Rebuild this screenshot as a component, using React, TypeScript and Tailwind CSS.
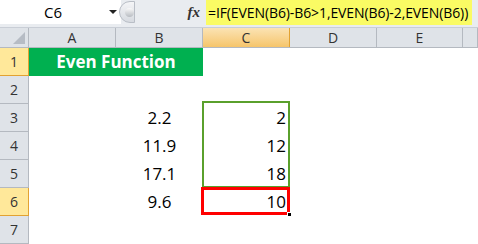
import React from "react";

const font = { fontFamily: '"Open Sans", "Liberation Sans", sans-serif' };

const cols = ["A", "B", "C", "D", "E", ""];

const rows: { b?: string; c?: string }[] = [
  {},
  {},
  { b: "2.2", c: "2" },
  { b: "11.9", c: "12" },
  { b: "17.1", c: "18" },
  { b: "9.6", c: "10" },
  {},
];

const App = () => {
  return (
    <div className="w-[478px] h-[244px] overflow-hidden bg-white text-black" style={font}>
      {/* formula bar */}
      <div className="flex h-[28px] bg-[#e9ecf0] border-b border-[#c9ced6]">
        <div className="flex h-[24px] w-[121px] items-center bg-white">
          <span className="w-[106px] text-center text-[15px]">C6</span>
          <span className="ml-[3px] h-0 w-0 border-x-[4px] border-t-[4px] border-x-transparent border-t-[#222]" />
        </div>
        <div className="relative flex h-[24px] w-[85px] items-center">
          {/* grip knob */}
          <div className="absolute left-[-2px] top-[1px] h-[22px] w-[16px] rounded-l-full border border-[#b9bec6] bg-gradient-to-b from-[#f4f5f7] to-[#d6dae0]">
            <div className="ml-[5px] mt-[6px] h-[9px] w-[9px] rounded-full bg-gradient-to-b from-[#fafafa] to-[#b8bcc2]" />
          </div>
          <span
            className="ml-auto mr-[6px] text-[15px] italic font-bold text-[#333]"
            style={{ fontFamily: '"Liberation Serif", serif' }}
          >
            fx
          </span>
        </div>
        <div className="flex h-[25px] w-[266px] items-center overflow-hidden whitespace-nowrap bg-[#fafb64] pl-[2px] text-[14px] tracking-[-0.1px]">
          =IF(EVEN(B6)-B6&gt;1,EVEN(B6)-2,EVEN(B6))
        </div>
      </div>

      {/* column headers */}
      <div className="flex h-[20px] border-b border-[#b4b9c0] bg-[#dfe3e8] text-[14px] text-[#333]">
        <div className="relative w-[29px] border-r border-[#b4b9c0]">
          <div className="absolute bottom-[3px] right-[3px] h-0 w-0 border-b-[12px] border-l-[12px] border-b-[#b6bcc4] border-l-transparent" />
        </div>
        {cols.map((c, i) => (
          <div
            key={i}
            className={`flex items-center justify-center border-r ${
              i === 5 ? "flex-1" : i === 4 ? "w-[86px]" : "w-[87px]"
            } ${
              c === "C"
                ? "border-[#e2a232] bg-gradient-to-b from-[#fbe3b3] to-[#f6c56a]"
                : "border-[#b4b9c0]"
            }`}
          >
            {c}
          </div>
        ))}
      </div>

      {/* grid */}
      <div className="relative">
        {rows.map((r, i) => {
          const n = i + 1;
          const hi = n === 1 || n === 6;
          return (
            <div key={i} className="flex h-[28px]">
              <div
                className={`flex w-[29px] items-center justify-center border-r border-b text-[14px] text-[#333] ${
                  hi
                    ? "border-[#e2a232] bg-[#ffe89a]"
                    : "border-[#b4b9c0] bg-[#dfe3e8]"
                }`}
              >
                {n}
              </div>
              {n === 1 ? (
                <div className="flex w-[174px] items-center justify-center bg-[#00b050] text-[17px] font-bold text-white">
                  Even Function
                </div>
              ) : (
                <>
                  <div className="w-[87px]" />
                  <div className="flex w-[87px] items-center justify-center text-[17px]">{r.b}</div>
                </>
              )}
              <div className="flex w-[87px] items-center justify-end pr-[4px] text-[17px]">{r.c}</div>
              <div className="flex-1" />
            </div>
          );
        })}
        {/* selection outlines */}
        <div className="absolute left-[202px] top-[53px] h-[87px] w-[88px] border-2 border-[#5aa02c]" />
        <div className="absolute left-[201px] top-[139px] h-[28px] w-[89px] border-[3px] border-[#ff0000]" />
        <div className="absolute left-[287px] top-[164px] h-[5px] w-[5px] border border-white bg-black" />
      </div>
    </div>
  );
};

export default App;
